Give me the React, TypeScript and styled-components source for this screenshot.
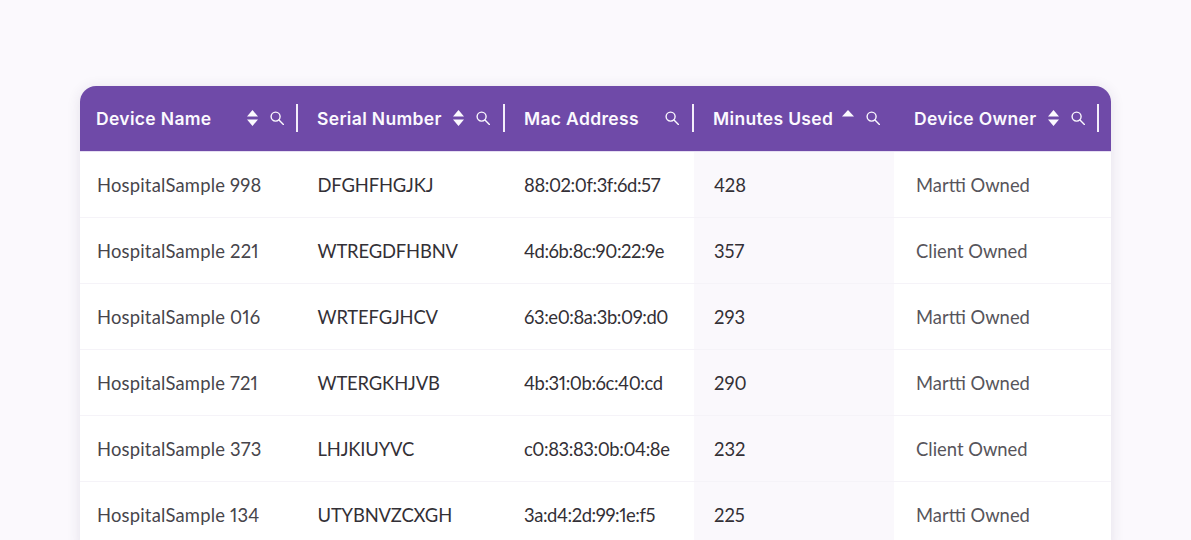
import React from "react";
import styled, { createGlobalStyle } from "styled-components";

const Global = createGlobalStyle`
  html, body { margin: 0; padding: 0; height: 540px; overflow: hidden; background: #fbf9fd; }
  #root { height: 540px; overflow: hidden; }
`;

const Page = styled.main`
  box-sizing: border-box;
  height: 540px;
  padding: 86px 80px 0;
  overflow: hidden;
  font-family: Lato, "Liberation Sans", sans-serif;
`;

const Card = styled.div`
  width: 1031px;
  border-radius: 16px 16px 0 0;
  background: #ffffff;
  box-shadow: 0 2px 14px rgba(60, 40, 90, 0.12);
`;

const COLS = "217.5px 207px 189.5px 200px 217px";

const HeaderRow = styled.div`
  display: grid;
  grid-template-columns: ${COLS};
  height: 65px;
  border-radius: 16px 16px 0 0;
  background: #6f4aa8;
  border-bottom: 1px solid #e6dff2;
`;

const HeaderCell = styled.div<{ $pad: number; $dividerRight: number | null }>`
  position: relative;
  display: flex;
  align-items: center;
  padding-left: ${(p) => p.$pad}px;
  color: #fbf9fe;
  font-family: Inter, sans-serif;
  font-size: 17.5px;
  font-weight: 600;
  letter-spacing: 0.33px;
  &::after {
    content: "";
    display: ${(p) => (p.$dividerRight === null ? "none" : "block")};
    position: absolute;
    right: ${(p) => p.$dividerRight}px;
    top: 18px;
    width: 2px;
    height: 28px;
    background: #f3eefa;
  }
`;

const Tools = styled.span<{ $right: number }>`
  position: absolute;
  right: ${(p) => p.$right}px;
  top: 24px;
  height: 16px;
  display: flex;
  align-items: center;
  gap: 12px;
`;

const Row = styled.div`
  display: grid;
  grid-template-columns: ${COLS};
  height: 66px;
  box-sizing: border-box;
  border-bottom: 1px solid #f5f3f8;
`;

const Cell = styled.div<{ $pad: number; $sorted?: boolean; $tone: string; $spacing?: number }>`
  display: flex;
  align-items: center;
  padding-left: ${(p) => p.$pad}px;
  background: ${(p) => (p.$sorted ? "#faf8fc" : "transparent")};
  color: ${(p) => p.$tone};
  font-size: 18.4px;
  font-family: Lato, sans-serif;
  font-weight: 400;
  font-variant-numeric: proportional-nums;
  letter-spacing: ${(p) => p.$spacing ?? 0}px;
  white-space: nowrap;
`;

const SortBoth = () => (
  <svg width="11" height="16" viewBox="0 0 11 16">
    <path d="M5.5 0 11 6.6H0Z M5.5 16 0 9.4h11Z" fill="#fbf9fe" />
  </svg>
);

const SortUp = () => (
  <svg width="12" height="16" viewBox="0 0 12 16" style={{ alignSelf: "flex-start" }}>
    <path d="M6 0 12 6.6H0Z" fill="#fbf9fe" />
  </svg>
);

const Search = () => (
  <svg width="14" height="14" viewBox="0 0 14 14" fill="none" stroke="#fbf9fe" strokeWidth="1.4">
    <circle cx="5.6" cy="5.6" r="4.5" />
    <path d="M9 9l4.4 4.4" strokeLinecap="round" />
  </svg>
);

const headers = [
  { label: "Device Name", right: 14, sort: "both", dividerRight: 0, pad: 16 },
  { label: "Serial Number", right: 15, sort: "both", dividerRight: 0, pad: 19.5 },
  { label: "Mac Address", right: 15, sort: "none", dividerRight: 0, pad: 19.5 },
  { label: "Minutes Used", right: 14, sort: "up", dividerRight: null, pad: 19 },
  { label: "Device Owner", right: 26, sort: "both", dividerRight: 12, pad: 20 },
];

const rows = [
  ["HospitalSample 998", "DFGHFHGJKJ", "88:02:0f:3f:6d:57", "428", "Martti Owned"],
  ["HospitalSample 221", "WTREGDFHBNV", "4d:6b:8c:90:22:9e", "357", "Client Owned"],
  ["HospitalSample 016", "WRTEFGJHCV", "63:e0:8a:3b:09:d0", "293", "Martti Owned"],
  ["HospitalSample 721", "WTERGKHJVB", "4b:31:0b:6c:40:cd", "290", "Martti Owned"],
  ["HospitalSample 373", "LHJKIUYVC", "c0:83:83:0b:04:8e", "232", "Client Owned"],
  ["HospitalSample 134", "UTYBNVZCXGH", "3a:d4:2d:99:1e:f5", "225", "Martti Owned"],
];

export default function App() {
  return (
    <Page>
      <Global />
      <Card>
        <HeaderRow>
          {headers.map((h) => (
            <HeaderCell key={h.label} $pad={h.pad} $dividerRight={h.dividerRight}>
              {h.label}
              <Tools $right={h.right}>
                {h.sort === "both" && <SortBoth />}
                {h.sort === "up" && <SortUp />}
                <Search />
              </Tools>
            </HeaderCell>
          ))}
        </HeaderRow>
        {rows.map((r) => (
          <Row key={r[0]}>
            <Cell $pad={17} $tone="#47454b" $spacing={0.2}>{r[0]}</Cell>
            <Cell $pad={20} $tone="#333036" $spacing={-0.15}>{r[1]}</Cell>
            <Cell $pad={19.5} $tone="#333036" $spacing={-0.42}>{r[2]}</Cell>
            <Cell $pad={20} $tone="#333036" $sorted>{r[3]}</Cell>
            <Cell $pad={22} $tone="#57555b">{r[4]}</Cell>
          </Row>
        ))}
      </Card>
    </Page>
  );
}
